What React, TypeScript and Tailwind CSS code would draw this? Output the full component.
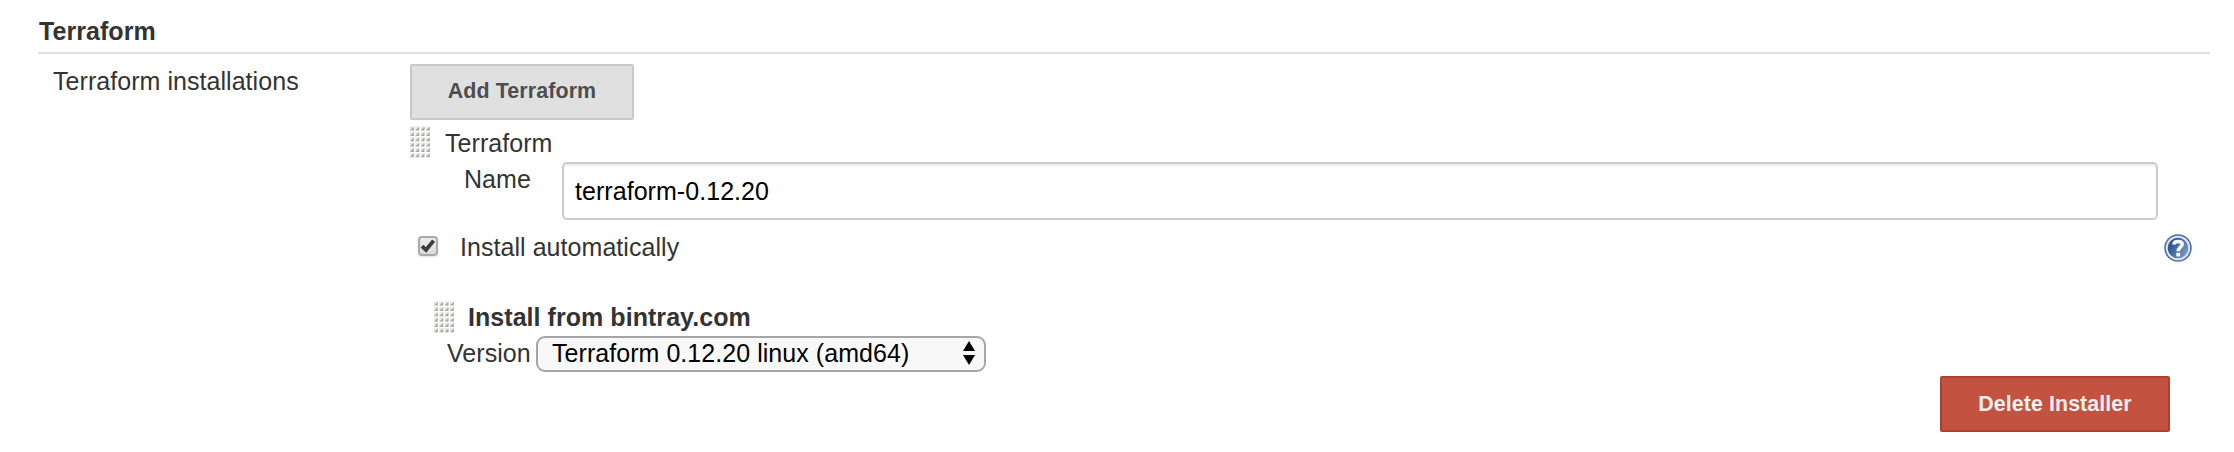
import React from "react";

function Grip() {
  const dots = [];
  for (let r = 0; r < 6; r++) {
    for (let c = 0; c < 4; c++) {
      const x = c * 5.33;
      const y = r * 5.33;
      dots.push(
        <g key={`${r}-${c}`}>
          <rect x={x} y={y + 0.6} width="4" height="4" fill="#d2d2ce" opacity="0.55" />
          <path d={`M${x + 3.8} ${y + 0.8}V${y + 4.6}H${x}Z`} fill="#a9a9a5" />
        </g>,
      );
    }
  }
  return (
    <svg className="h-8 w-5 shrink-0" viewBox="0 0 20 32">
      {dots}
    </svg>
  );
}

function HelpIcon() {
  return (
    <svg className="h-7 w-7 shrink-0" viewBox="0 0 28 28">
      <defs>
        <linearGradient id="help" x1="0" y1="0.2" x2="1" y2="0.8">
          <stop offset="0.2" stopColor="#2f5596" />
          <stop offset="1" stopColor="#86a1cb" />
        </linearGradient>
      </defs>
      <circle cx="14" cy="14" r="13.8" fill="#4c6ca5" />
      <circle cx="14" cy="14" r="11.3" fill="url(#help)" stroke="#dde4f0" strokeWidth="2" />
      <path d="M10 10.4C10 6.6 18.2 6.4 18.2 10.2C18.2 13.2 14.2 13.4 14.2 17.2" fill="none" stroke="#fff" strokeWidth="3.6" />
      <rect x="12.3" y="18.8" width="3.8" height="3.6" fill="#fff" />
    </svg>
  );
}

function Checkbox() {
  return (
    <span className="flex h-5 w-5 items-center justify-center rounded-[4px] border-2 border-[#a9a9a9] bg-linear-to-b from-[#ececec] to-[#dcdcdc] shadow-[0_1px_2px_rgba(0,0,0,0.12)]">
      <svg className="h-4 w-4 shrink-0" viewBox="0 0 16 16">
        <path d="M2 8.2L6 12L13.6 2.6" fill="none" stroke="#3c3c3c" strokeWidth="3.8" />
      </svg>
    </span>
  );
}

export default function App() {
  return (
    <div className="h-[452px] w-[2234px] overflow-hidden bg-white font-['Liberation_Sans',Helvetica,Arial,sans-serif] text-[25px] leading-7 tracking-[0.05px] whitespace-nowrap text-[#333]">
      <div className="ml-[38px] flex h-[54px] w-[2172px] items-start border-b-2 border-[#dfdfdf] pt-[17px] pl-px font-bold">
        Terraform
      </div>
      <div className="flex">
        <div className="w-[410px] shrink-0 pt-[13px] pl-[53px]">Terraform installations</div>
        <div className="w-[1824px] pt-[10px]">
          <button className="flex h-14 w-56 items-center justify-center rounded-[2px] border-2 border-[#c8c8c8] bg-[#e0e0e0] pb-0.5 text-[21.4px] font-bold tracking-[0.12px] text-[#4d4d4d]">
            Add Terraform
          </button>
          <div className="flex h-[42px] pt-1.5">
            <Grip />
            <div className="mt-[3px] ml-[15px]">Terraform</div>
          </div>
          <div className="flex">
            <div className="w-[152px] pt-[3px] pl-[54px]">Name</div>
            <div className="flex h-[58px] w-[1596px] items-center rounded-[5px] border-2 border-[#ccc] bg-white pl-[11px] text-black shadow-[inset_0_2px_2px_rgba(0,0,0,0.075)]">
              terraform-0.12.20
            </div>
          </div>
          <div className="flex h-[81px] items-start pt-[14px]">
            <div className="mt-0.5 ml-2">
              <Checkbox />
            </div>
            <div className="ml-[22px] w-[1704px]">
              <div className="-mt-px">Install automatically</div>
            </div>
            <HelpIcon />
          </div>
          <div className="flex h-[35px] pl-6">
            <Grip />
            <div className="mt-0.5 ml-[14px] font-bold">Install from bintray.com</div>
          </div>
          <div className="flex h-10 pl-[37px]">
            <div className="w-[89px] pt-[3px]">Version</div>
            <div className="flex h-9 w-[450px] items-center justify-between rounded-[9px] border-2 border-[#a6a6a6] bg-[#f8f8f8] pr-[9px] pb-0.5 pl-[14px] text-black">
              <span>Terraform 0.12.20 linux (amd64)</span>
              <svg className="h-6 w-3" viewBox="0 0 12 24">
                <path d="M6 0L12 10H0ZM0 14H12L6 24Z" fill="#000" />
              </svg>
            </div>
          </div>
          <button className="ml-[1530px] flex h-14 w-[230px] items-center justify-center rounded-[2px] border-2 border-[#ae4232] bg-[#c35340] text-[21.4px] font-bold tracking-[0.08px] text-[#f0f0f0]">
            Delete Installer
          </button>
        </div>
      </div>
    </div>
  );
}
